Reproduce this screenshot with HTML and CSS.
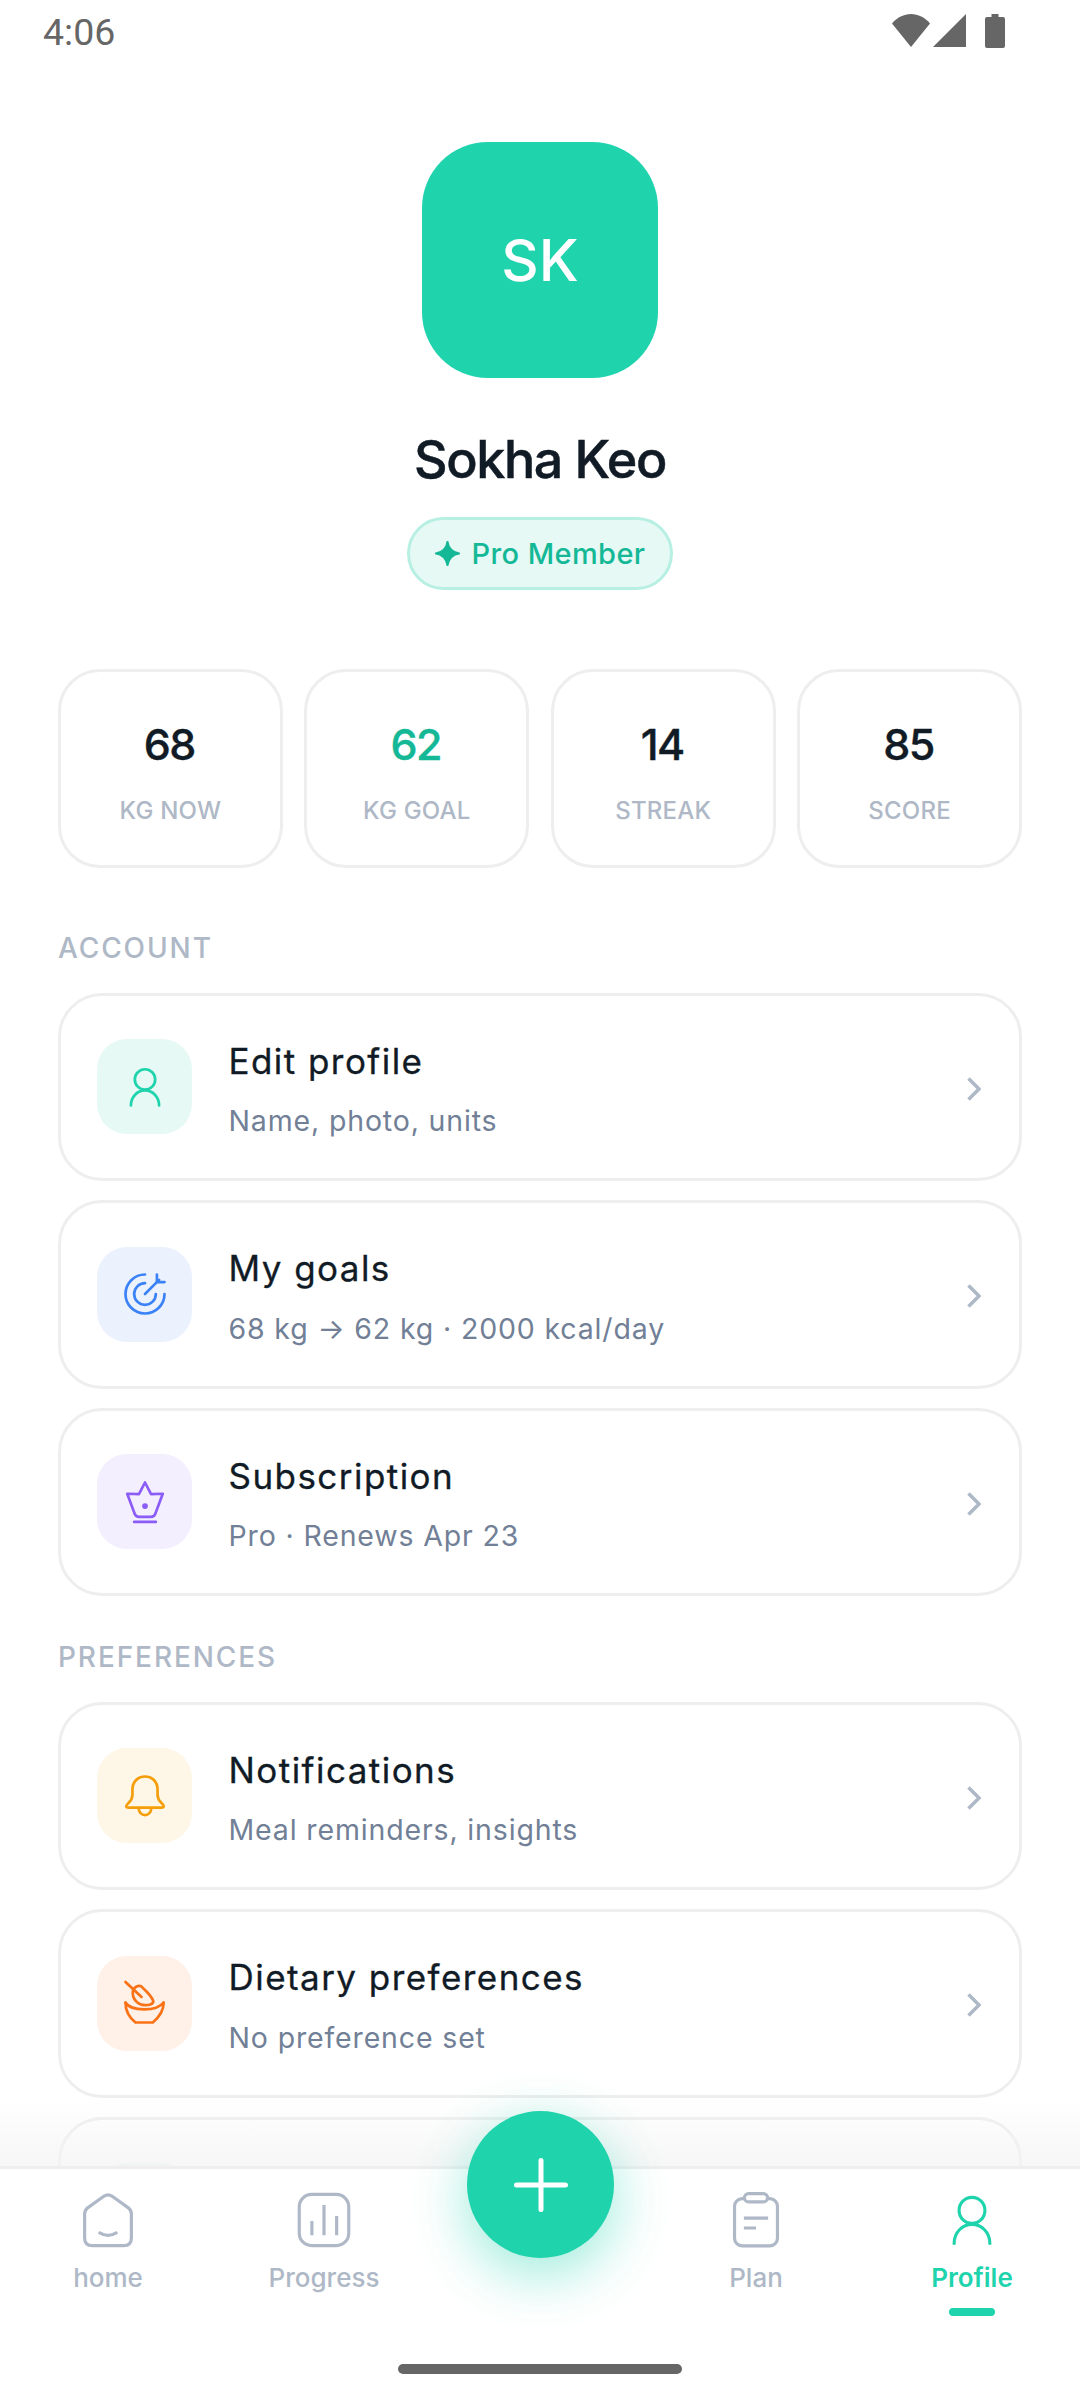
FILE: index.html
```html
<!DOCTYPE html>
<html lang="en">
<head>
<meta charset="utf-8">
<title>Profile</title>
<link rel="stylesheet" href="styles.css">
</head>
<body>
<div class="screen">
  <header class="status">
    <span class="status-time">4:06</span>
    <span class="status-icons">
      <svg class="st-wifi" viewBox="0 0 38 33"><path d="M0 9.500C5 3.500 12 0 19 0s14 3.500 19 9.500L19 33Z"/></svg>
      <svg class="st-signal" viewBox="0 0 33 33"><path d="M33 0V33H0Z"/></svg>
      <svg class="st-batt" viewBox="0 0 20 34"><path d="M6.500 0h7v3H18a2 2 0 0 1 2 2v27a2 2 0 0 1-2 2H2a2 2 0 0 1-2-2V5a2 2 0 0 1 2-2h4.500Z"/></svg>
    </span>
  </header>

  <main class="content">
    <section class="hero">
      <div class="avatar">SK</div>
      <h1 class="name">Sokha Keo</h1>
      <div class="pill">
        <svg class="pill-star" viewBox="0 0 24 24"><path d="M12 0Q13.500 10.500 24 12 13.500 13.500 12 24 10.500 13.500 0 12 10.500 10.500 12 0Z" class="star-fill"/></svg>
        <span>Pro Member</span>
      </div>
    </section>

    <section class="stats">
      <div class="stat"><div class="stat-num">68</div><div class="stat-label">KG NOW</div></div>
      <div class="stat"><div class="stat-num stat-num-accent">62</div><div class="stat-label">KG GOAL</div></div>
      <div class="stat"><div class="stat-num">14</div><div class="stat-label">STREAK</div></div>
      <div class="stat"><div class="stat-num">85</div><div class="stat-label">SCORE</div></div>
    </section>

    <h2 class="section-label">ACCOUNT</h2>
    <div class="list">
      <div class="row">
        <div class="row-icon tint-teal">
          <svg class="i i-teal" viewBox="0 0 24 24"><circle cx="12" cy="8.500" r="4.700"/><path d="M5.500 20.500C5.500 16.500 8.500 13.600 12 13.600S18.500 16.500 18.500 20.500"/></svg>
        </div>
        <div class="row-text"><div class="row-title">Edit profile</div><div class="row-sub">Name, photo, units</div></div>
        <svg class="chev" viewBox="0 0 14 24"><path d="M1.500 1.500 12 12 1.500 22.500"/></svg>
      </div>
      <div class="row">
        <div class="row-icon tint-blue">
          <svg class="i i-blue" viewBox="0 0 24 24"><path d="M12 3A9 9 0 1 0 21 12"/><path d="M12 7A5 5 0 1 0 17 12"/><path d="M12 12 18.500 5.500"/><path d="M17.500 3V6.500H21"/></svg>
        </div>
        <div class="row-text"><div class="row-title">My goals</div><div class="row-sub">68 kg → 62 kg · 2000 kcal/day</div></div>
        <svg class="chev" viewBox="0 0 14 24"><path d="M1.500 1.500 12 12 1.500 22.500"/></svg>
      </div>
      <div class="row">
        <div class="row-icon tint-purple">
          <svg class="i i-purple" viewBox="0 0 24 24"><path d="M3.800 8.200 9.200 8.400 12 3 14.800 8.400 20.200 8.200 17 16.800Q16.500 18.900 14.500 18.900H9.500Q7.500 18.900 7 16.800Z"/><path d="M7 21.200H17"/><circle class="dot" cx="12" cy="13.900" r=".7"/></svg>
        </div>
        <div class="row-text"><div class="row-title">Subscription</div><div class="row-sub">Pro · Renews Apr 23</div></div>
        <svg class="chev" viewBox="0 0 14 24"><path d="M1.500 1.500 12 12 1.500 22.500"/></svg>
      </div>
    </div>

    <h2 class="section-label section-label-2">PREFERENCES</h2>
    <div class="list">
      <div class="row">
        <div class="row-icon tint-amber">
          <svg class="i i-amber" viewBox="0 0 24 24"><path d="M12 3C8.500 3 6.200 5.600 6.200 9V11.500C6.200 13 5.600 14 4.400 15.200 3 16.400 3 17.400 4.500 17.400H19.500C21 17.400 21 16.400 19.600 15.200 18.400 14 17.800 13 17.800 11.500V9C17.800 5.600 15.500 3 12 3Z"/><path d="M9 17.600C9.400 20 10.600 20.800 12 20.800S14.600 20 15 17.600"/></svg>
        </div>
        <div class="row-text"><div class="row-title">Notifications</div><div class="row-sub">Meal reminders, insights</div></div>
        <svg class="chev" viewBox="0 0 14 24"><path d="M1.500 1.500 12 12 1.500 22.500"/></svg>
      </div>
      <div class="row">
        <div class="row-icon tint-orange">
          <svg class="i i-orange" viewBox="0 0 24 24"><path d="M3 2.300 10.400 9.200"/><path d="M6.400 6.500C7 4.400 9.500 3.200 11 5 12.500 6.600 14.500 8 15.800 11 16 12.500 14 13 12 13 8.500 13 6 10 6.400 6.500Z"/><path d="M3 11.800C3 15.500 5 19 7.600 21H15.600C18 19 20.600 15.500 20.600 11.800"/><path d="M3 11.800C5.500 16 17.500 16 20.600 11.800"/></svg>
        </div>
        <div class="row-text"><div class="row-title">Dietary preferences</div><div class="row-sub">No preference set</div></div>
        <svg class="chev" viewBox="0 0 14 24"><path d="M1.500 1.500 12 12 1.500 22.500"/></svg>
      </div>
      <div class="row">
        <div class="row-icon tint-teal"></div>
        <div class="row-text"></div>
      </div>
    </div>
  </main>

  <nav class="tabbar">
    <div class="tabfade"></div>
    <div class="tab">
      <svg class="tab-icon" viewBox="0 0 24 24"><path d="M10.600 3.300 4.600 7.600Q3.500 8.400 3.500 9.800V18.500Q3.500 21.300 6.300 21.300H17.700Q20.500 21.300 20.500 18.500V9.800Q20.500 8.400 19.400 7.600L13.400 3.300Q12 2.400 10.600 3.300Z"/><path d="M9 16.700Q12 18.500 15 16.700"/></svg>
      <span class="tab-label">home</span>
    </div>
    <div class="tab">
      <svg class="tab-icon" viewBox="0 0 24 24"><rect x="3" y="2.700" width="18" height="18.600" rx="4.500"/><path class="butt" d="M7.600 12.400V17.500M12 6.500V17.500M16.600 10.500V17.500"/></svg>
      <span class="tab-label">Progress</span>
    </div>
    <div class="tab tab-spacer"></div>
    <div class="tab">
      <svg class="tab-icon" viewBox="0 0 24 24"><rect x="4.200" y="4.200" width="15.600" height="17.200" rx="2.800"/><rect class="clip" x="7.800" y="2.400" width="8.400" height="3" rx="1.500"/><path class="butt" d="M7.600 11.300H16.400M7.600 14.900H12"/></svg>
      <span class="tab-label">Plan</span>
    </div>
    <div class="tab tab-active">
      <svg class="tab-icon" viewBox="0 0 24 24"><circle cx="12" cy="8.500" r="4.700"/><path d="M5.500 20.500C5.500 16.500 8.500 13.600 12 13.600S18.500 16.500 18.500 20.500"/></svg>
      <span class="tab-label">Profile</span>
      <span class="tab-marker"></span>
    </div>
    <div class="fab">
      <svg class="fab-plus" viewBox="0 0 54 54"><path d="M27 2.500V51.500M2.500 27H51.500"/></svg>
    </div>
    <div class="home-bar"></div>
  </nav>
</div>
</body>
</html>
```

FILE: styles.css
```css
* { box-sizing: border-box; }
html, body { margin: 0; padding: 0; background: #fff; }
body { font-family: "Inter", "Noto Sans", sans-serif; color: #111b26; }

.screen { position: relative; width: 1080px; height: 2400px; overflow: hidden; background: #fff; }

.status { height: 66px; padding: 14px 75px 0 43px; display: flex; justify-content: space-between; align-items: flex-start; }
.status-time { font-family: "Roboto", sans-serif; font-size: 37.500px; line-height: 36px; color: #666; }
.status-icons { display: flex; align-items: flex-start; }
.status-icons svg { display: block; fill: #666; }
.st-wifi { width: 38px; height: 33px; }
.st-signal { width: 33px; height: 33px; margin-left: 3px; }
.st-batt { width: 20px; height: 34px; margin-left: 19px; }

.content { padding: 0 58px; }

.hero { display: flex; flex-direction: column; align-items: center; }
.avatar { width: 236px; height: 236px; margin-top: 76px; border-radius: 66px; background: #1fd3ad; color: #fff; font-size: 58px; font-weight: 500; display: flex; align-items: center; justify-content: center; }
.name { margin: 52px 0 0; font-size: 52px; line-height: 60px; font-weight: 500; letter-spacing: -1.400px; -webkit-text-stroke: .5px #111b26; color: #111b26; }
.pill { margin-top: 27px; height: 73px; width: 266px; border: 3px solid #b7efe3; border-radius: 37px; background: #e6f9f5; color: #14b896; display: flex; align-items: center; justify-content: center; gap: 12px; font-size: 29px; font-weight: 500; letter-spacing: .4px; }
.pill-star { width: 25px; height: 25px; flex: none; }
.star-fill { fill: #14b896; stroke: #14b896; stroke-width: 1.500; stroke-linejoin: round; }

.stats { margin-top: 79px; display: grid; grid-template-columns: repeat(4, 1fr); gap: 21.700px; }
.stat { height: 199px; border: 3px solid #eeeeee; border-radius: 42px; background: #fff; display: flex; flex-direction: column; align-items: center; padding-top: 45px; }
.stat-num { margin-left: -2px; font-size: 43px; line-height: 54px; font-weight: 500; letter-spacing: -1.500px; -webkit-text-stroke: .4px currentColor; color: #111b26; }
.stat-num-accent { color: #14b896; }
.stat-label { margin-top: 25px; font-size: 24px; line-height: 30px; font-weight: 500; letter-spacing: .2px; color: #aeb8c6; }

.section-label { margin: 63px 0 27.500px; font-size: 28px; line-height: 34px; font-weight: 500; letter-spacing: 1.900px; color: #aeb8c6; }
.section-label-2 { margin-top: 44px; }

.list { display: flex; flex-direction: column; gap: 19px; }
.row { height: 188.500px; border: 3px solid #eeeeee; border-radius: 44px; background: #fff; display: flex; align-items: center; padding: 0 36px; }
.row-icon { width: 95px; height: 95px; border-radius: 30px; flex: none; display: flex; align-items: center; justify-content: center; }
.tint-teal { background: #e6f9f5; }
.tint-blue { background: #ebf2fe; }
.tint-purple { background: #f3effe; }
.tint-amber { background: #fef6e7; }
.tint-orange { background: #fff0e8; }
.i { width: 52px; height: 52px; fill: none; stroke-width: 1.250; stroke-linecap: round; stroke-linejoin: round; }
.i-teal { stroke: #1fd3ad; }
.i-blue { stroke: #3b82f6; }
.i-purple { stroke: #8b5cf6; }
.i-amber { stroke: #f59e0b; }
.i-orange { stroke: #f97316; }
.dot { fill: #8b5cf6; }
.row-text { flex: 1; margin-left: 36.500px; padding-top: 4.500px; }
.row-title { font-size: 35px; line-height: 44px; font-weight: 400; letter-spacing: 1.450px; -webkit-text-stroke: .3px #111b26; color: #111b26; }
.row-sub { margin-top: 20.500px; font-size: 28.500px; line-height: 36px; letter-spacing: .85px; color: #718096; }
.chev { width: 14px; height: 24px; fill: none; stroke: #aeb8c6; stroke-width: 3.500; flex: none; margin: 4px 2px 0 0; }

.tabbar { position: absolute; left: 0; right: 0; bottom: 0; height: 234px; background: #fff; border-top: 3px solid #eeeeee; display: grid; grid-template-columns: repeat(5, 216px); align-items: start; }
.tabfade { position: absolute; left: 0; right: 0; bottom: 100%; margin-bottom: 3px; height: 70px; background: linear-gradient(to bottom, rgba(244,244,244,0), rgba(244,244,244,.75)); }
.tab { display: flex; flex-direction: column; align-items: center; padding-top: 18px; }
.tab-icon { width: 66px; height: 66px; fill: none; stroke: #aeb8c6; stroke-width: 1.150; stroke-linecap: round; stroke-linejoin: round; display: block; }
.butt { stroke-linecap: butt; }
.clip { fill: #fff; }
.tab-label { margin-top: 8px; font-size: 26px; line-height: 34px; font-weight: 500; color: #aeb8c6; }
.tab-active .tab-icon { stroke: #1fd3ad; }
.tab-active .tab-label { color: #1fd3ad; font-weight: 600; }
.tab-marker { width: 46px; height: 8px; margin-top: 13px; border-radius: 4px; background: #1fd3ad; }

.fab { position: absolute; left: 467px; top: -58px; width: 147px; height: 147px; border-radius: 50%; background: #1fd3ad; box-shadow: 0 16px 56px rgba(31,211,173,.45); display: flex; align-items: center; justify-content: center; }
.fab-plus { width: 54px; height: 54px; fill: none; stroke: #fff; stroke-width: 5; stroke-linecap: round; }
.home-bar { position: absolute; left: 398px; top: 195px; width: 284px; height: 10px; border-radius: 5px; background: #666; }
```
